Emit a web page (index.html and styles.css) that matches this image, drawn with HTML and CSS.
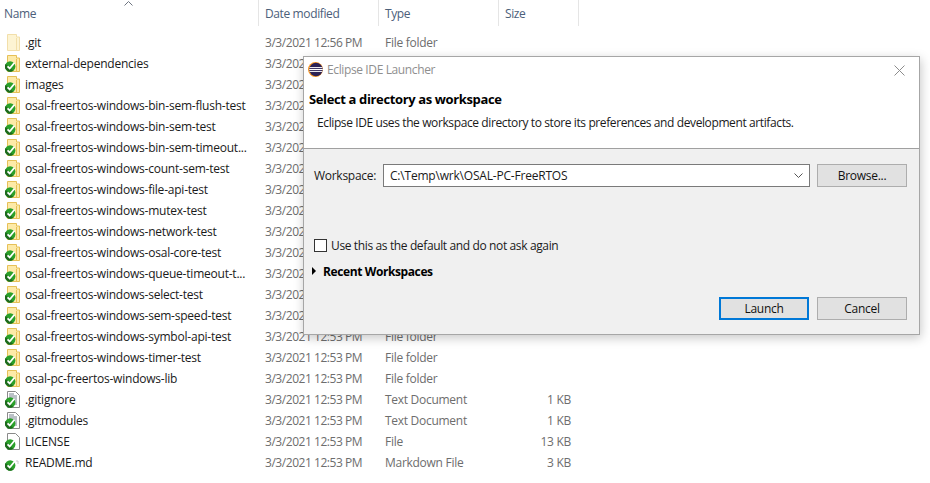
FILE: index.html
```html
<!DOCTYPE html>
<html lang="en">
<head>
  <meta charset="UTF-8" />
  <title>Eclipse IDE Launcher</title>
  <link rel="stylesheet" href="styles.css">
</head>
<body>

  <svg class="defs" width="0" height="0">
    <defs>
      <symbol id="folder" viewBox="0 0 13 17">
        <path d="M.5.500h9v2.500h3v13.500h-12z" fill="#fdeaa8" stroke="#e6c057"/>
        <path d="M9.500 4v12" stroke="#e6c057"/>
      </symbol>
      <symbol id="doc" viewBox="0 0 13 17">
        <path d="M.5.500h8l4 4v12h-12z" fill="#fff" stroke="#8a8a8a"/>
        <path d="M2 3h5M2 5h8M2 7h8M2 9h8M2 11h8M2 13h8" stroke="#77828e"/>
      </symbol>
      <symbol id="plain" viewBox="0 0 13 17">
        <path d="M.5.500h8l4 4v12h-12z" fill="#fff" stroke="#8a8a8a"/>
      </symbol>
      <symbol id="faint" viewBox="0 0 13 17">
        <path d="M9 7h2v3" fill="none" stroke="#c8c8c8"/>
      </symbol>
      <symbol id="ok" viewBox="0 0 11 11">
        <circle cx="5.200" cy="5.500" r="5.200" fill="#2aa02a"/>
        <path d="M.6 3a5.200 5.200 0 0 0 7.500 6.800z" fill="#1d6a1d"/>
        <path d="M2.500 5.300l2.200 2.200 4.700-5.800" fill="none" stroke="#fff" stroke-width="1.800"/>
      </symbol>
    </defs>
  </svg>

  <!-- Explorer list -->
  <div class="explorer">
    <div class="head">
      <div class="col-name">Name<svg class="sort" width="9" height="5" viewBox="0 0 9 5"><path d="M.5 4.500l4-4 4 4" fill="none" stroke="#6d7480"/></svg></div>
      <div class="col-date">Date modified</div>
      <div class="col-type">Type</div>
      <div class="col-size">Size</div>
    </div>

    <div class="row">
      <div class="name"><span class="icon"><svg class="ghost" width="13" height="17"><use href="#folder"/></svg></span>.git</div>
      <div class="date">3/3/2021 12:56 PM</div><div class="type">File folder</div><div class="size"></div>
    </div>
    <div class="row">
      <div class="name"><span class="icon"><svg width="13" height="17"><use href="#folder"/></svg><svg class="badge" width="11" height="11"><use href="#ok"/></svg></span>external-dependencies</div>
      <div class="date">3/3/2021 12:53 PM</div><div class="type">File folder</div><div class="size"></div>
    </div>
    <div class="row">
      <div class="name"><span class="icon"><svg width="13" height="17"><use href="#folder"/></svg><svg class="badge" width="11" height="11"><use href="#ok"/></svg></span>images</div>
      <div class="date">3/3/2021 12:53 PM</div><div class="type">File folder</div><div class="size"></div>
    </div>
    <div class="row">
      <div class="name"><span class="icon"><svg width="13" height="17"><use href="#folder"/></svg><svg class="badge" width="11" height="11"><use href="#ok"/></svg></span>osal-freertos-windows-bin-sem-flush-test</div>
      <div class="date">3/3/2021 12:53 PM</div><div class="type">File folder</div><div class="size"></div>
    </div>
    <div class="row">
      <div class="name"><span class="icon"><svg width="13" height="17"><use href="#folder"/></svg><svg class="badge" width="11" height="11"><use href="#ok"/></svg></span>osal-freertos-windows-bin-sem-test</div>
      <div class="date">3/3/2021 12:53 PM</div><div class="type">File folder</div><div class="size"></div>
    </div>
    <div class="row">
      <div class="name"><span class="icon"><svg width="13" height="17"><use href="#folder"/></svg><svg class="badge" width="11" height="11"><use href="#ok"/></svg></span>osal-freertos-windows-bin-sem-timeout...</div>
      <div class="date">3/3/2021 12:53 PM</div><div class="type">File folder</div><div class="size"></div>
    </div>
    <div class="row">
      <div class="name"><span class="icon"><svg width="13" height="17"><use href="#folder"/></svg><svg class="badge" width="11" height="11"><use href="#ok"/></svg></span>osal-freertos-windows-count-sem-test</div>
      <div class="date">3/3/2021 12:53 PM</div><div class="type">File folder</div><div class="size"></div>
    </div>
    <div class="row">
      <div class="name"><span class="icon"><svg width="13" height="17"><use href="#folder"/></svg><svg class="badge" width="11" height="11"><use href="#ok"/></svg></span>osal-freertos-windows-file-api-test</div>
      <div class="date">3/3/2021 12:53 PM</div><div class="type">File folder</div><div class="size"></div>
    </div>
    <div class="row">
      <div class="name"><span class="icon"><svg width="13" height="17"><use href="#folder"/></svg><svg class="badge" width="11" height="11"><use href="#ok"/></svg></span>osal-freertos-windows-mutex-test</div>
      <div class="date">3/3/2021 12:53 PM</div><div class="type">File folder</div><div class="size"></div>
    </div>
    <div class="row">
      <div class="name"><span class="icon"><svg width="13" height="17"><use href="#folder"/></svg><svg class="badge" width="11" height="11"><use href="#ok"/></svg></span>osal-freertos-windows-network-test</div>
      <div class="date">3/3/2021 12:53 PM</div><div class="type">File folder</div><div class="size"></div>
    </div>
    <div class="row">
      <div class="name"><span class="icon"><svg width="13" height="17"><use href="#folder"/></svg><svg class="badge" width="11" height="11"><use href="#ok"/></svg></span>osal-freertos-windows-osal-core-test</div>
      <div class="date">3/3/2021 12:53 PM</div><div class="type">File folder</div><div class="size"></div>
    </div>
    <div class="row">
      <div class="name"><span class="icon"><svg width="13" height="17"><use href="#folder"/></svg><svg class="badge" width="11" height="11"><use href="#ok"/></svg></span>osal-freertos-windows-queue-timeout-t...</div>
      <div class="date">3/3/2021 12:53 PM</div><div class="type">File folder</div><div class="size"></div>
    </div>
    <div class="row">
      <div class="name"><span class="icon"><svg width="13" height="17"><use href="#folder"/></svg><svg class="badge" width="11" height="11"><use href="#ok"/></svg></span>osal-freertos-windows-select-test</div>
      <div class="date">3/3/2021 12:53 PM</div><div class="type">File folder</div><div class="size"></div>
    </div>
    <div class="row">
      <div class="name"><span class="icon"><svg width="13" height="17"><use href="#folder"/></svg><svg class="badge" width="11" height="11"><use href="#ok"/></svg></span>osal-freertos-windows-sem-speed-test</div>
      <div class="date">3/3/2021 12:53 PM</div><div class="type">File folder</div><div class="size"></div>
    </div>
    <div class="row">
      <div class="name"><span class="icon"><svg width="13" height="17"><use href="#folder"/></svg><svg class="badge" width="11" height="11"><use href="#ok"/></svg></span>osal-freertos-windows-symbol-api-test</div>
      <div class="date">3/3/2021 12:53 PM</div><div class="type">File folder</div><div class="size"></div>
    </div>
    <div class="row">
      <div class="name"><span class="icon"><svg width="13" height="17"><use href="#folder"/></svg><svg class="badge" width="11" height="11"><use href="#ok"/></svg></span>osal-freertos-windows-timer-test</div>
      <div class="date">3/3/2021 12:53 PM</div><div class="type">File folder</div><div class="size"></div>
    </div>
    <div class="row">
      <div class="name"><span class="icon"><svg width="13" height="17"><use href="#folder"/></svg><svg class="badge" width="11" height="11"><use href="#ok"/></svg></span>osal-pc-freertos-windows-lib</div>
      <div class="date">3/3/2021 12:53 PM</div><div class="type">File folder</div><div class="size"></div>
    </div>
    <div class="row">
      <div class="name"><span class="icon"><svg width="13" height="17"><use href="#doc"/></svg><svg class="badge" width="11" height="11"><use href="#ok"/></svg></span>.gitignore</div>
      <div class="date">3/3/2021 12:53 PM</div><div class="type">Text Document</div><div class="size">1 KB</div>
    </div>
    <div class="row">
      <div class="name"><span class="icon"><svg width="13" height="17"><use href="#doc"/></svg><svg class="badge" width="11" height="11"><use href="#ok"/></svg></span>.gitmodules</div>
      <div class="date">3/3/2021 12:53 PM</div><div class="type">Text Document</div><div class="size">1 KB</div>
    </div>
    <div class="row">
      <div class="name"><span class="icon"><svg width="13" height="17"><use href="#plain"/></svg><svg class="badge" width="11" height="11"><use href="#ok"/></svg></span>LICENSE</div>
      <div class="date">3/3/2021 12:53 PM</div><div class="type">File</div><div class="size">13 KB</div>
    </div>
    <div class="row">
      <div class="name"><span class="icon"><svg width="13" height="17"><use href="#faint"/></svg><svg class="badge" width="11" height="11"><use href="#ok"/></svg></span>README.md</div>
      <div class="date">3/3/2021 12:53 PM</div><div class="type">Markdown File</div><div class="size">3 KB</div>
    </div>
  </div>

  <!-- Launcher dialog -->
  <div class="dialog">
    <div class="dialog-top">
      <div class="titlebar">
        <svg width="15" height="15" viewBox="0 0 15 15">
          <circle cx="7.500" cy="7.500" r="7.500" fill="#f7941e"/>
          <circle cx="8" cy="7.500" r="6.700" fill="#2c2255"/>
          <path d="M1.500 5.600h13M1.200 7.500h13.600M1.500 9.400h13" stroke="#fff" stroke-width="1"/>
        </svg>
        <span class="title">Eclipse IDE Launcher</span>
        <svg class="close" width="11" height="11" viewBox="0 0 11 11"><path d="M.5.500l10 10M10.500.500l-10 10" stroke="#8c8c8c" fill="none"/></svg>
      </div>
      <h1>Select a directory as workspace</h1>
      <p>Eclipse IDE uses the workspace directory to store its preferences and development artifacts.</p>
    </div>
    <div class="dialog-body">
      <div class="ws-row">
        <label class="ws-label">Workspace:</label>
        <div class="combo">
          <span>C:\Temp\wrk\OSAL-PC-FreeRTOS</span>
          <svg width="9" height="5" viewBox="0 0 9 5"><path d="M.5.500l4 4 4-4" fill="none" stroke="#555"/></svg>
        </div>
        <button class="btn">Browse...</button>
      </div>
      <div class="check-row"><span class="checkbox"></span><span class="check-text">Use this as the default and do not ask again</span></div>
      <div class="recent"><span class="arrow"></span>Recent Workspaces</div>
      <div class="actions">
        <button class="btn btn-default">Launch</button>
        <button class="btn">Cancel</button>
      </div>
    </div>
  </div>

</body>
</html>
```

FILE: styles.css
```css
body {
  margin: 0;
  width: 930px;
  height: 483px;
  overflow: hidden;
  background: #fff;
  font-family: 'Open Sans', 'Noto Sans', sans-serif;
  font-size: 12px;
  letter-spacing: -0.28px;
  color: #1a1a1a;
  position: relative;
}

.defs {
  position: absolute;
}

/* Explorer list */
.head {
  display: flex;
  height: 26px;
  margin-bottom: 7px;
  color: #4c607a;
  letter-spacing: -0.38px;
}

.head > div {
  box-sizing: border-box;
  padding-top: 5px;
  border-right: 1px solid #e5e5e5;
  padding-left: 6px;
}

.head .col-name {
  width: 259px;
  position: relative;
  padding-left: 4px;
}

.col-date, .col-type {
  width: 120px;
}

.col-size {
  width: 80px;
}

.sort {
  position: absolute;
  left: 124px;
  top: 1px;
}

.row {
  display: flex;
  height: 21px;
  line-height: 20px;
  white-space: nowrap;
}

.name {
  width: 259px;
  display: flex;
  padding-left: 5px;
  box-sizing: border-box;
  line-height: 19px;
  letter-spacing: -0.22px;
}

.icon {
  width: 20px;
  height: 17px;
  margin-top: 1px;
  flex: none;
  position: relative;
  display: block;
}

.icon svg {
  position: absolute;
  left: 2px;
  top: 0;
}

.icon .ghost {
  opacity: 0.5;
}

.icon .badge {
  left: 0;
  top: 6px;
}

.date, .type {
  width: 120px;
  box-sizing: border-box;
  padding-left: 6px;
  color: #6d6d6d;
}

.date {
  letter-spacing: -0.45px;
}

.size {
  width: 72px;
  text-align: right;
  color: #6d6d6d;
}

/* Launcher dialog */
.dialog {
  position: absolute;
  left: 303px;
  top: 56px;
  width: 617px;
  height: 279px;
  box-sizing: border-box;
  border: 1px solid #a6a6a6;
  box-shadow: 1px 3px 10px rgba(0, 0, 0, 0.22);
  display: flex;
  flex-direction: column;
  background: #f0f0f0;
}

.dialog-top {
  height: 91px;
  background: #fff;
  border-bottom: 1px solid #a0a0a0;
  padding: 0 5px;
  flex: none;
}

.titlebar {
  display: flex;
  align-items: center;
  gap: 4px;
  height: 22px;
  margin-top: 1px;
  margin-left: -1px;
  letter-spacing: -0.38px;
}

.title {
  color: #8f8f8f;
  flex: 1;
}

.close {
  margin-right: 9px;
  margin-top: 2px;
}

h1 {
  font-size: 13px;
  font-weight: 700;
  margin: 11px 0 0;
  line-height: 16px;
  color: #000;
  letter-spacing: -0.37px;
}

.dialog-top p {
  margin: 8px 0 0 8px;
  line-height: 16px;
  letter-spacing: -0.39px;
}

.dialog-body {
  padding: 15px 12px 0 10px;
  flex: 1;
}

.ws-row {
  display: flex;
  align-items: center;
}

.ws-label {
  width: 69px;
  flex: none;
}

.combo {
  width: 427px;
  height: 23px;
  box-sizing: border-box;
  border: 1px solid #7a7a7a;
  background: #fff;
  display: flex;
  align-items: center;
  justify-content: space-between;
  padding: 0 6px;
  margin-right: 7px;
  letter-spacing: -0.2px;
}

.btn {
  width: 90px;
  height: 23px;
  box-sizing: border-box;
  border: 1px solid #adadad;
  background: #e1e1e1;
  font: inherit;
  letter-spacing: inherit;
  color: #111;
  padding: 0;
}

.btn-default {
  border: 2px solid #0078d7;
}

.check-row {
  display: flex;
  align-items: center;
  gap: 4px;
  margin-top: 50px;
  height: 16px;
}

.check-text {
  letter-spacing: -0.37px;
}

.checkbox {
  width: 13px;
  height: 13px;
  box-sizing: border-box;
  border: 1px solid #333;
  background: #fff;
}

.recent {
  display: flex;
  align-items: center;
  margin: 10px 0 0 -2px;
  height: 16px;
  font-weight: 700;
  color: #000;
  letter-spacing: -0.4px;
}

.arrow {
  width: 0;
  height: 0;
  border-left: 4px solid #000;
  border-top: 4px solid transparent;
  border-bottom: 4px solid transparent;
  margin-right: 7px;
}

.actions {
  display: flex;
  justify-content: flex-end;
  gap: 8px;
  margin-top: 18px;
}
```
